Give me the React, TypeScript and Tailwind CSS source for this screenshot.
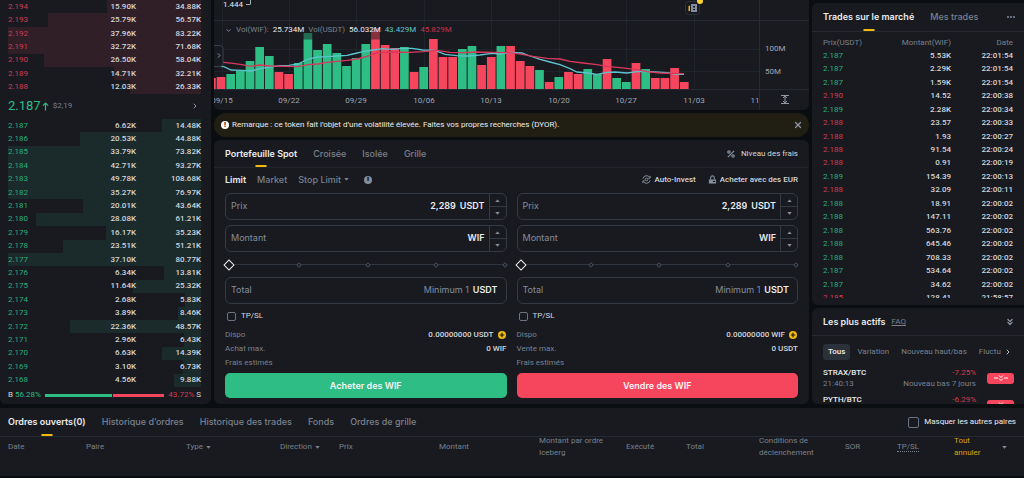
import { useState, type ReactNode } from "react"
import { ChevronDown, ChevronRight, ChevronsDown, X } from "lucide-react"

const asks = [
  ["2.194", "15.90K", "34.88K"],
  ["2.193", "25.79K", "56.57K"],
  ["2.192", "37.96K", "83.22K"],
  ["2.191", "32.72K", "71.68K"],
  ["2.190", "26.50K", "58.04K"],
  ["2.189", "14.71K", "32.21K"],
  ["2.188", "12.03K", "26.33K"],
]

const bids = [
  ["2.187", "6.62K", "14.48K"],
  ["2.186", "20.53K", "44.88K"],
  ["2.185", "33.79K", "73.82K"],
  ["2.184", "42.71K", "93.27K"],
  ["2.183", "49.78K", "108.68K"],
  ["2.182", "35.27K", "76.97K"],
  ["2.181", "20.01K", "43.64K"],
  ["2.180", "28.08K", "61.21K"],
  ["2.179", "16.17K", "35.23K"],
  ["2.178", "23.51K", "51.21K"],
  ["2.177", "37.10K", "80.77K"],
  ["2.176", "6.34K", "13.81K"],
  ["2.175", "11.64K", "25.32K"],
  ["2.174", "2.68K", "5.83K"],
  ["2.173", "3.89K", "8.46K"],
  ["2.172", "22.36K", "48.57K"],
  ["2.171", "2.96K", "6.43K"],
  ["2.170", "6.63K", "14.39K"],
  ["2.169", "3.10K", "6.73K"],
  ["2.168", "4.56K", "9.88K"],
]

const trades = [
  ["2.187", "5.53K", "22:01:54", "up"],
  ["2.187", "2.29K", "22:01:54", "up"],
  ["2.187", "1.59K", "22:01:54", "up"],
  ["2.190", "14.52", "22:00:38", "down"],
  ["2.189", "2.28K", "22:00:34", "up"],
  ["2.188", "23.57", "22:00:33", "down"],
  ["2.188", "1.93", "22:00:27", "down"],
  ["2.188", "91.54", "22:00:24", "down"],
  ["2.188", "0.91", "22:00:19", "down"],
  ["2.189", "154.39", "22:00:13", "up"],
  ["2.188", "32.09", "22:00:11", "down"],
  ["2.188", "18.91", "22:00:02", "up"],
  ["2.188", "147.11", "22:00:02", "up"],
  ["2.188", "563.76", "22:00:02", "up"],
  ["2.188", "645.46", "22:00:02", "up"],
  ["2.188", "708.33", "22:00:02", "up"],
  ["2.187", "534.64", "22:00:02", "up"],
  ["2.187", "34.62", "22:00:02", "up"],
  ["2.185", "128.41", "21:58:57", "down"],
]

// [direction, top of the bar]
const volumes: [string, number][] = [
  ["d", 78], ["d", 77], ["u", 74], ["u", 71], ["u", 61], ["u", 47], ["u", 56], ["d", 72], ["d", 74], ["u", 63],
  ["u", 33], ["u", 50], ["u", 44], ["u", 53], ["u", 66], ["u", 58], ["u", 44], ["d", 28], ["d", 45], ["d", 48],
  ["u", 47], ["d", 72], ["u", 67], ["d", 39], ["d", 57], ["d", 57], ["u", 49], ["u", 46], ["d", 65], ["d", 57],
  ["u", 46], ["d", 46], ["d", 61], ["d", 66], ["u", 70], ["d", 82], ["u", 77], ["d", 72], ["d", 74], ["u", 69],
  ["u", 74], ["d", 59], ["u", 78], ["u", 82], ["d", 63], ["u", 69], ["d", 78], ["d", 78], ["d", 68], ["d", 82],
]

const dates: [string, number][] = [
  ["09/15", 8], ["09/22", 75], ["09/29", 142], ["10/06", 210], ["10/13", 277],
  ["10/20", 345], ["10/27", 412], ["11/03", 480], ["11", 541],
]

const maFast =
  "0,66 10,66.7 17,70 28,70.3 37,71 46,68.7 56,67 66,65.7 75,65.3 84,64 94,59 104,57 113,56.7 123,56 133,55.3 139,54 149,51.7 159,50 169,48.7 178,49.3 188,48.3 198,48.3 209,50 221,50.3 231,54.3 243,55.7 254,56 266,55 278,53.3 286,54 296,52.3 308,53 316,56 326,59.3 336,62 346,64.7 356,68.7 363,72 374,73 383,74.3 393,72.3 401,72 413,73 423,71.7 433,71.3 453,72.7 463,74.3 470,74.3"
const maSlow =
  "0,62 10,62.3 19,63.3 28,64.7 36,66.3 46,65 56,66 74,66.3 84,66.7 94,64.7 104,64 113,62.3 123,61.3 133,60.3 143,59 153,56.3 163,52.7 178,52 196,52.3 209,51.7 223,50.3 236,52.3 249,52.7 263,52 279,52.3 296,52.7 308,54.3 319,56.3 333,58.3 346,59 356,61.3 369,63 383,64.7 393,66.3 406,67.7 423,69.7 433,71.7 446,73 459,73.3 470,73.7"

function Caret({ up = false }: { up?: boolean }) {
  return (
    <svg viewBox="0 0 6 4" className="h-[3px] w-[5px] shrink-0" fill="currentColor">
      <path d={up ? "M0 4L3 0.5L6 4Z" : "M0 0L3 3.5L6 0Z"} />
    </svg>
  )
}

function BookRows({ rows, side }: { rows: string[][]; side: "ask" | "bid" }) {
  return (
    <>
      {rows.map(([price, amount, total]) => (
        <tr key={price} className="relative flex min-h-0 flex-1 items-center">
          <td className={`relative z-10 w-[60px] ${side === "ask" ? "text-[#d13a53]" : "text-[#2bae7c]"}`}>{price}</td>
          <td className="relative z-10 w-[68px] text-right font-medium">{amount}</td>
          <td className="flex-1 text-right font-medium">
            <span
              className={`absolute inset-y-0 right-0 ${side === "ask" ? "bg-[#311f27]" : "bg-[#1b2a2a]"}`}
              style={{ width: `${Math.min(100, parseFloat(total) / 0.715)}%` }}
            />
            <span className="relative z-10">{total}</span>
          </td>
        </tr>
      ))}
    </>
  )
}

function OrderBook() {
  return (
    <section className="flex w-[211px] shrink-0 flex-col rounded-b-md bg-[#181a20] px-2 pr-[10px] text-[8px] leading-3 text-[#d3d6db]">
      <table className="flex flex-[7] flex-col">
        <tbody className="flex flex-1 flex-col">
          <BookRows rows={asks} side="ask" />
        </tbody>
      </table>
      <div className="flex h-[25px] items-center">
        <span className="text-[13px] text-[#2ebd85]">2.187</span>
        <svg viewBox="0 0 8 10" className="ml-px h-[9px] w-[7px]" fill="none" stroke="#2ebd85" strokeWidth="1.3">
          <path d="M4 9.5V1M1 4L4 1L7 4" />
        </svg>
        <span className="ml-1 text-[#78818e]">$2,19</span>
        <button aria-label="Plus" className="ml-auto mr-0.5 text-[#9098a3]">
          <ChevronRight size={8} strokeWidth={3} />
        </button>
      </div>
      <table className="flex flex-[20] flex-col">
        <tbody className="flex flex-1 flex-col">
          <BookRows rows={bids} side="bid" />
        </tbody>
      </table>
      <div className="flex h-[17px] items-center pb-px">
        <span>B</span>
        <span className="ml-0.5 text-[#2ebd85]">56.28%</span>
        <div className="mx-1 flex h-[3px] flex-1 gap-px">
          <div className="bg-[#2ebd85]" style={{ width: "56.28%" }} />
          <div className="flex-1 bg-[#f6465d]" />
        </div>
        <span className="mr-0.5 text-[#d13a53]">43.72%</span>
        <span>S</span>
      </div>
    </section>
  )
}

function VolumeChart() {
  return (
    <section className="relative overflow-hidden rounded-b-md bg-[#181a20]">
      <svg viewBox="0 0 595 110" className="block w-full" fontFamily="Roboto, sans-serif">
        <g stroke="#1f232a">
          {[8.5, 75.5, 142.5, 210.5, 277.5, 345.5, 412.5, 480.5].map((x) => (
            <path key={x} d={`M${x} 0V89`} />
          ))}
          <path d="M0 49.5H545M0 71.5H545" />
        </g>
        <path d="M0 20.5H595M0 89.5H595M545.5 0V110" stroke="#252a33" />
        {volumes.map(([dir, top], i) => (
          <rect
            key={i}
            x={2.7 + 9.65 * (i - 1)}
            y={top}
            width="8.7"
            height={89 - top}
            fill={dir === "u" ? "#2ebd85" : "#f6465d"}
          />
        ))}
        <rect x="88" y="24" width="84" height="15.5" fill="#181a20" opacity="0.5" />
        <polyline points={maFast} fill="none" stroke="#5cc4cf" strokeWidth="1.3" />
        <polyline points={maSlow} fill="none" stroke="#d9385e" strokeWidth="1.3" />
        <path d="M32 4.5H36.500M36.500 0V4" fill="none" stroke="#aab0b8" />
        <text x="9" y="7" fontSize="8" fill="#eaecef">1.444</text>
        <g fontSize="8" fill="#a0a7b1" textAnchor="middle">
          {dates.map(([label, x]) => (
            <text key={label} x={x} y="103">{label}</text>
          ))}
        </g>
        <g fontSize="8" fill="#a0a7b1">
          <text x="551" y="51">100M</text>
          <text x="551" y="74">50M</text>
        </g>
        <path d="M567 95.5H575M567 103.5H575M571 96V103M569 98L571 96L573 98M569 101L571 103L573 101" fill="none" stroke="#9098a3" />
        <rect x="-4" y="45.5" width="13" height="21" rx="3" fill="#181a20" stroke="#3a414b" />
        <path d="M4 53.5L6 55.5L4 57.5" fill="none" stroke="#9098a3" />
        <rect x="471.5" y="1.5" width="14" height="13" rx="3" fill="#181a20" stroke="#2b3139" />
        <path d="M477 4H483V12H477Z" fill="#848e9c" />
        <path d="M479 6H481V7.500H479ZM479 9H481V10H479Z" fill="#181a20" />
        <path d="M474.500 6L476 5.500V11H474.500Z" fill="#f0b90b" />
        <circle cx="486" cy="1" r="3" fill="#fcd535" />
      </svg>
      <div className="absolute left-[11px] top-6 flex items-center gap-1 text-[8px] leading-3 text-[#78818e]">
        <ChevronDown size={7} strokeWidth={3} className="text-[#9098a3]" />
        <span>Vol(WIF):</span>
        <span className="text-[#eaecef]">25.734M</span>
        <span>Vol(USDT)</span>
        <span className="text-[#eaecef]">56.032M</span>
        <span className="text-[#5cc4cf]">43.429M</span>
        <span className="text-[#c23350]">45.829M</span>
      </div>
    </section>
  )
}

function Notice() {
  return (
    <div className="flex h-6 items-center rounded-xl bg-[#211f14] pl-[7px] pr-[6px] text-[8px] text-[#eaecef]">
      <span className="flex size-2 items-center justify-center rounded-full bg-white text-[7px] font-black text-[#26210f]">!</span>
      <p className="ml-[3px] flex-1">
        Remarque : ce token fait l’objet d’une volatilité élevée. Faites vos propres recherches (DYOR).
      </p>
      <button aria-label="Fermer" className="text-[#9098a3]">
        <X size={10} strokeWidth={3} />
      </button>
    </div>
  )
}

function Field({ id, label, unit, value = "", placeholder, stepper = true }: {
  id: string
  label: string
  unit: string
  value?: string
  placeholder?: string
  stepper?: boolean
}) {
  return (
    <div className="flex h-[27px] items-stretch overflow-hidden rounded-md border border-[#333a43] font-['Inter',sans-serif] text-[9px]">
      <label htmlFor={id} className="flex items-center pb-0.5 pl-[5px] text-[#848e9c]">{label}</label>
      <input
        id={id}
        defaultValue={value}
        placeholder={placeholder}
        className="min-w-0 flex-1 bg-transparent px-1 pb-0.5 text-right font-semibold text-[#eaecef] outline-none placeholder:font-normal placeholder:text-[#848e9c]"
      />
      <span className={`flex items-center pb-0.5 font-semibold text-[#eaecef] ${stepper ? "pr-1" : "pr-2"}`}>{unit}</span>
      {stepper && (
        <div className="flex w-[17px] flex-col divide-y divide-[#333a43] border-l border-[#333a43] text-[#848e9c]">
          <button type="button" aria-label={`Augmenter ${label}`} className="flex flex-1 items-center justify-center"><Caret up /></button>
          <button type="button" aria-label={`Diminuer ${label}`} className="flex flex-1 items-center justify-center"><Caret /></button>
        </div>
      )}
    </div>
  )
}

function AmountSlider({ label }: { label: string }) {
  const [percent, setPercent] = useState(0)
  return (
    <div className="relative flex h-[25px] items-center">
      <div className="h-px w-full bg-[#2f363f]" />
      <div className="absolute inset-x-0 flex items-center justify-between">
        {[0, 25, 50, 75, 100].map((step) => (
          <span
            key={step}
            className={
              step === percent
                ? "size-2 rotate-45 border border-[#eaecef] bg-[#181a20]"
                : "size-1 rotate-45 border border-[#474d57] bg-[#181a20]"
            }
          />
        ))}
      </div>
      <input
        type="range"
        aria-label={label}
        min={0}
        max={100}
        step={25}
        value={percent}
        onChange={(e) => setPercent(Number(e.target.value))}
        className="absolute inset-0 w-full cursor-pointer opacity-0"
      />
    </div>
  )
}

function OrderForm({ side }: { side: "buy" | "sell" }) {
  const buy = side === "buy"
  return (
    <form className="flex min-w-0 flex-1 flex-col" onSubmit={(e) => e.preventDefault()}>
      <div className="flex flex-col gap-[5px]">
        <Field id={`${side}-price`} label="Prix" value="2,289" unit="USDT" />
        <Field id={`${side}-amount`} label="Montant" unit="WIF" />
      </div>
      <AmountSlider label={buy ? "Part à acheter" : "Part à vendre"} />
      <Field id={`${side}-total`} label="Total" placeholder="Minimum 1" unit="USDT" stepper={false} />
      <label className="flex h-6 items-center gap-[5px] pl-0.5 text-[8px] text-[#d3d6db]">
        <input type="checkbox" className="size-[9px] appearance-none rounded-[2px] border border-[#6b7482]" />
        TP/SL
      </label>
      <dl className="text-[8px] leading-[14px] text-[#78818e]">
        <div className="flex items-center justify-between">
          <dt>Dispo</dt>
          <dd className="flex items-center gap-1 font-medium text-[#d3d6db]">
            0.00000000 {buy ? "USDT" : "WIF"}
            <button type="button" aria-label="Déposer" className="mr-px">
              <svg viewBox="0 0 8 8" className="size-2">
                <circle cx="4" cy="4" r="4" fill="#f0b90b" />
                <path d="M4 1.800V6.200M1.800 4H6.200" stroke="#181a20" strokeWidth="1.200" />
              </svg>
            </button>
          </dd>
        </div>
        <div className="flex justify-between">
          <dt>{buy ? "Achat max." : "Vente max."}</dt>
          <dd className="font-medium text-[#d3d6db]">0 {buy ? "WIF" : "USDT"}</dd>
        </div>
        <div>
          <dt>Frais estimés</dt>
        </div>
      </dl>
      <button
        type="submit"
        className={`mt-[3px] h-[25px] rounded-[5px] font-['Inter',sans-serif] text-[9px] font-semibold text-[#f5f5f5] ${buy ? "bg-[#2ebd85]" : "bg-[#f6465d]"}`}
      >
        {buy ? "Acheter des WIF" : "Vendre des WIF"}
      </button>
    </form>
  )
}

function Tab({ active = false, children }: { active?: boolean; children: ReactNode }) {
  return (
    <button
      className={`relative flex h-full items-center font-['Inter',sans-serif] text-[9px] ${active ? "font-semibold text-[#eaecef]" : "font-medium text-[#78818e]"}`}
    >
      {children}
      {active && <span className="absolute bottom-0 left-1/2 h-0.5 w-[11px] -translate-x-1/2 bg-[#f0b90b]" />}
    </button>
  )
}

function TradePanel() {
  return (
    <section className="rounded-md bg-[#181a20] pb-[6px]">
      <div className="flex h-[28px] items-center gap-4 border-b border-[#20242b] px-[11px]">
        <Tab active>Portefeuille Spot</Tab>
        <Tab>Croisée</Tab>
        <Tab>Isolée</Tab>
        <Tab>Grille</Tab>
        <a href="#frais" className="ml-auto flex items-center gap-1.5 text-[8px] text-[#d3d6db]">
          <svg viewBox="0 0 9 9" className="size-2" fill="none" stroke="#848e9c" strokeWidth="1.400">
            <path d="M8 1L1 8" />
            <circle cx="2.200" cy="2.200" r="1.300" />
            <circle cx="6.800" cy="6.800" r="1.300" />
          </svg>
          Niveau des frais
        </a>
      </div>
      <div className="flex h-[25px] items-center px-[11px] pb-0.5 font-['Inter',sans-serif] text-[9px] font-medium text-[#78818e]">
        <button className="font-semibold text-[#eaecef]">Limit</button>
        <button className="ml-[11px]">Market</button>
        <button className="ml-[11px] flex items-center gap-[3px]">Stop Limit <Caret /></button>
        <span className="ml-[15px] flex size-2 items-center justify-center rounded-full bg-[#848e9c] text-[7px] font-black text-[#181a20]">i</span>
        <div className="ml-auto flex items-center gap-3 font-['Roboto',sans-serif] text-[8px] text-[#d3d6db]">
          <a href="#auto" className="flex items-center gap-[3px]">
            <svg viewBox="0 0 10 10" className="size-[9px]" fill="none" stroke="#9098a3">
              <path d="M1 4A4.200 4.200 0 0 1 8.800 3M9 6A4.200 4.200 0 0 1 1.200 7M9 1V3.500H7M1 9V6.500H3" />
              <circle cx="5" cy="5" r="1.500" />
            </svg>
            Auto-Invest
          </a>
          <a href="#eur" className="flex items-center gap-[3px]">
            <svg viewBox="0 0 10 10" className="size-[9px]" fill="#848e9c">
              <path d="M1 5H9V9.500H1Z" />
              <path d="M3 5V3A2 2 0 0 1 7 3V5" fill="none" stroke="#848e9c" strokeWidth="1.200" />
              <path d="M5.500 6.500H8V7.800H5.500Z" fill="#181a20" />
            </svg>
            Acheter avec des EUR
          </a>
        </div>
      </div>
      <div className="flex gap-[10px] px-[11px]">
        <OrderForm side="buy" />
        <OrderForm side="sell" />
      </div>
    </section>
  )
}

function MarketTrades() {
  return (
    <section className="flex min-h-0 flex-1 flex-col rounded-l-md bg-[#181a20] pb-[7px]">
      <div className="flex h-[29px] shrink-0 items-center gap-4 border-b border-[#252a33] px-[11px]">
        <Tab active>Trades sur le marché</Tab>
        <Tab>Mes trades</Tab>
        <button aria-label="Options" className="ml-auto -mr-0.5 flex gap-px">
          <span className="size-0.5 rounded-full bg-[#848e9c]" />
          <span className="size-0.5 rounded-full bg-[#848e9c]" />
          <span className="size-0.5 rounded-full bg-[#848e9c]" />
        </button>
      </div>
      <table className="flex h-0 flex-1 flex-col overflow-hidden px-[11px] text-[8px] leading-3 text-[#d3d6db]">
        <thead>
          <tr className="flex h-[17px] items-end text-[#78818e]">
            <th className="w-[50px] text-left font-normal">Prix(USDT)</th>
            <th className="w-[78px] text-right font-normal">Montant(WIF)</th>
            <th className="flex-1 text-right font-normal">Date</th>
          </tr>
        </thead>
        <tbody className="-mb-[7px] flex flex-1 flex-col">
          {trades.map(([price, amount, time, dir], i) => (
            <tr key={i} className="flex min-h-0 flex-1 items-center">
              <td className={`w-[50px] ${dir === "up" ? "text-[#2bae7c]" : "text-[#d13a53]"}`}>{price}</td>
              <td className="w-[78px] text-right font-medium">{amount}</td>
              <td className="flex-1 text-right font-medium">{time}</td>
            </tr>
          ))}
        </tbody>
      </table>
    </section>
  )
}

function Mover({ pair, time, change, note }: { pair: string; time: string; change: string; note: string }) {
  return (
    <li className="flex items-center gap-[11px]">
      <div className="flex-1">
        <p className="font-medium text-[#eaecef]">{pair}</p>
        <p>{time}</p>
      </div>
      <div className="text-right">
        <p className="text-[#d13a53]">{change}</p>
        <p>{note}</p>
      </div>
      <span className="flex h-[11px] w-[27px] items-center justify-center rounded-[3px] bg-[#f6465d]">
        <svg viewBox="0 0 14 6" className="h-1.5 w-3.5" fill="none" stroke="white">
          <path d="M0 3H4M10 3H14M5 0.500L7 2.500L9 0.500M5 3.500L7 5.500L9 3.500" />
        </svg>
      </span>
    </li>
  )
}

function TopMovers() {
  return (
    <section className="h-[96px] shrink-0 overflow-hidden rounded-l-md bg-[#181a20]">
      <div className="flex h-7 items-center border-b border-[#252a33] px-[11px]">
        <h2 className="font-['Inter',sans-serif] text-[9px] font-semibold text-[#eaecef]">Les plus actifs</h2>
        <a href="#faq" className="ml-1.5 text-[8px] text-[#78818e] underline">FAQ</a>
        <button aria-label="Réduire" className="ml-auto -mr-0.5 text-[#9098a3]">
          <ChevronsDown size={10} strokeWidth={3} />
        </button>
      </div>
      <div className="mt-2 flex h-4 items-center gap-[7px] whitespace-nowrap px-[11px] text-[8px] text-[#78818e]">
        <button className="h-4 rounded-[3px] bg-[#2b3139] px-[5px] font-medium text-[#eaecef]">Tous</button>
        <button>Variation</button>
        <button className="ml-[5px]">Nouveau haut/bas</button>
        <button className="ml-[5px]">Fluctu</button>
        <button aria-label="Suivant" className="-ml-1 text-[#b7bdc6]">
          <ChevronRight size={8} strokeWidth={3} />
        </button>
      </div>
      <ul className="mt-[7px] flex flex-col gap-[5px] pl-[11px] pr-[10px] text-[8px] leading-[11px] text-[#78818e]">
        <Mover pair="STRAX/BTC" time="21:40:13" change="-7.25%" note="Nouveau bas 7 jours" />
        <Mover pair="PYTH/BTC" time="21:38:02" change="-6.29%" note="Nouveau bas 7 jours" />
      </ul>
    </section>
  )
}

function OpenOrders() {
  return (
    <section className="mt-1 flex flex-col bg-[#181a20]">
      <div className="flex h-[29px] items-center gap-4 border-b border-[#252a33] px-2">
        <Tab active>Ordres ouverts(0)</Tab>
        <Tab>Historique d’ordres</Tab>
        <Tab>Historique des trades</Tab>
        <Tab>Fonds</Tab>
        <Tab>Ordres de grille</Tab>
        <label className="ml-auto flex items-center gap-[5px] text-[8px] text-[#eaecef]">
          <input type="checkbox" className="size-[11px] appearance-none rounded-[2px] border border-[#6b7482]" />
          Masquer les autres paires
        </label>
      </div>
      <table className="-mt-0.5 mb-[17px] ml-2 table-fixed text-left text-[8px] leading-3 text-[#78818e]">
        <thead>
          <tr className="[&>th]:p-0 [&>th]:font-normal">
            <th className="w-[78px]">Date</th>
            <th className="w-[100px]">Paire</th>
            <th className="w-[94px]"><button className="flex items-center gap-[3px]">Type <Caret /></button></th>
            <th className="w-[59px]"><button className="flex items-center gap-[3px]">Direction <Caret /></button></th>
            <th className="w-[100px]">Prix</th>
            <th className="w-[100px]">Montant</th>
            <th className="w-[87px]">Montant par ordre<br />Iceberg</th>
            <th className="w-[60px]">Exécuté</th>
            <th className="w-[73px]">Total</th>
            <th className="w-[86px]">Conditions de<br />déclenchement</th>
            <th className="w-[52px]">SOR</th>
            <th className="w-[57px]"><span className="border-b border-dotted border-[#78818e]">TP/SL</span></th>
            <th className="w-[48px] text-[#d9a30a]">Tout<br />annuler</th>
            <th><button aria-label="Plus d’actions" className="block text-[#848e9c]"><Caret /></button></th>
          </tr>
        </thead>
      </table>
    </section>
  )
}

export default function App() {
  return (
    <main className="min-h-screen overflow-hidden bg-[#0b0e11] font-['Roboto',sans-serif]">
      <div className="flex gap-[3px]">
        <OrderBook />
        <div className="flex min-w-0 flex-1 flex-col gap-[3px]">
          <VolumeChart />
          <Notice />
          <TradePanel />
        </div>
        <div className="flex w-[212px] shrink-0 flex-col gap-[3px] pt-[3px]">
          <MarketTrades />
          <TopMovers />
        </div>
      </div>
      <OpenOrders />
    </main>
  )
}
